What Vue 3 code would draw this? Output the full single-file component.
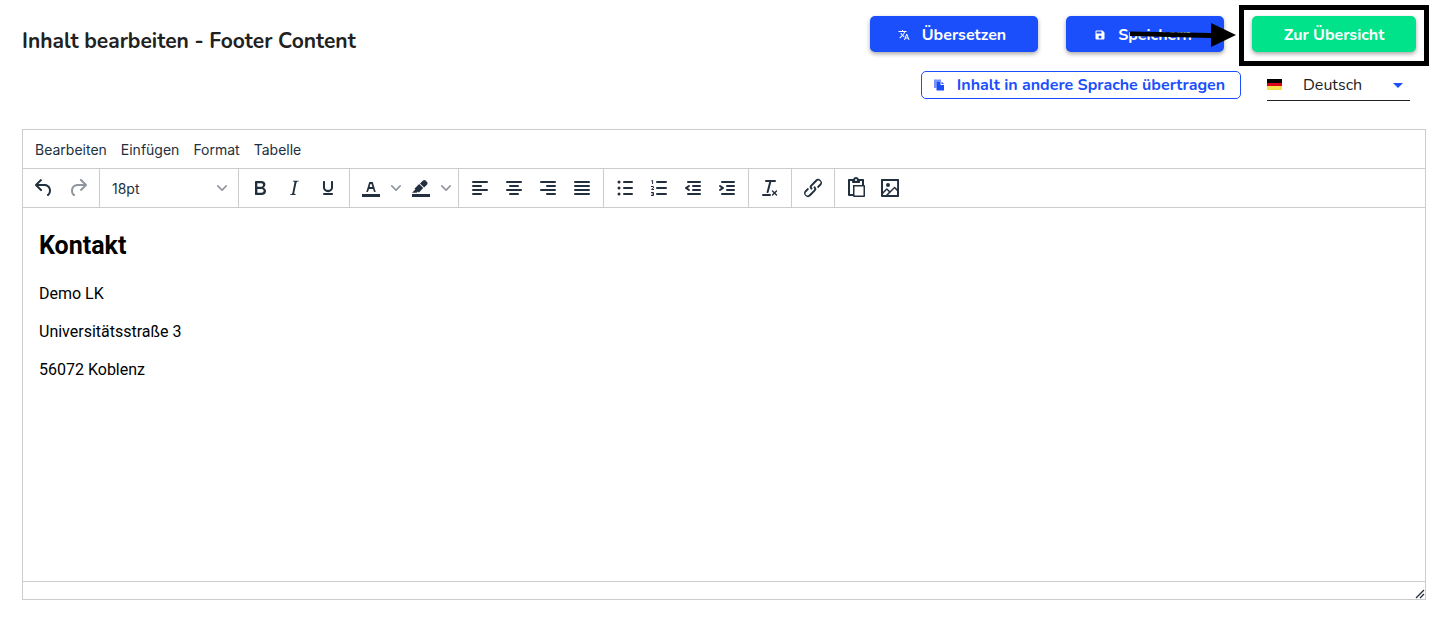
<script setup>
import { ref } from 'vue'

const menus = ['Bearbeiten', 'Einfügen', 'Format', 'Tabelle']
const sizes = ['12pt', '14pt', '18pt', '24pt']
const size = ref('18pt')
const languages = ['Deutsch', 'English']
const language = ref('Deutsch')

const bar = (x, y, w) => `M${x + 1} ${y}h${w - 2}a1 1 0 0 1 0 2h-${w - 2}a1 1 0 0 1 0-2Z`
const dot = (y) => `M4.5 ${y}a1.5 1.5 0 1 0 3 0a1.5 1.5 0 1 0-3 0Z`

const colorBar = 'M3 18h18v3H3z'
const chevron = 'M8.7 2.2c.3-.3.8-.3 1 0 .4.4.4.9 0 1.2L5.7 7.8c-.3.3-.9.3-1.2 0L.2 3.4a.8.8 0 0 1 0-1.2c.3-.3.8-.3 1.1 0L5 6l3.7-3.8Z'

const history = [
  { label: 'Rückgängig', d: 'M6.4 8H12c3.7 0 6.2 2 6.8 5.1.6 2.7-.4 5.6-2.3 6.8a1 1 0 0 1-1-1.8c1.1-.6 1.8-2.7 1.4-4.6-.5-2.1-2.1-3.5-4.9-3.5H6.4l3.3 3.3a1 1 0 1 1-1.4 1.4l-5-5a1 1 0 0 1 0-1.4l5-5a1 1 0 0 1 1.4 1.4L6.4 8Z' },
  { label: 'Wiederholen', disabled: true, d: 'M17.6 10H12c-2.8 0-4.4 1.4-4.9 3.5-.4 2 .3 4 1.4 4.6a1 1 0 1 1-1 1.8c-2-1.2-2.9-4.1-2.3-6.8.6-3 3-5.1 6.8-5.1h5.6l-3.3-3.3a1 1 0 1 1 1.4-1.4l5 5a1 1 0 0 1 0 1.4l-5 5a1 1 0 0 1-1.4-1.4l3.3-3.3Z' },
]

const groups = [
  [
    { label: 'Fett', d: 'M7.8 19c-.3 0-.5 0-.6-.2l-.2-.5V5.7c0-.2 0-.4.2-.5l.6-.2h5c1.5 0 2.7.3 3.5 1 .7.6 1.1 1.4 1.1 2.5a3 3 0 0 1-.6 1.9c-.4.6-1 1-1.6 1.2.4.1.9.3 1.3.6s.8.7 1 1.2c.4.4.5 1 .5 1.6 0 1.3-.4 2.3-1.3 3-.8.7-2.1 1-3.8 1H7.8Zm5-8.3c.6 0 1.2-.1 1.6-.5.4-.3.6-.7.6-1.3 0-1.1-.8-1.7-2.3-1.7H9.3v3.5h3.4Zm.5 6c.7 0 1.3-.1 1.7-.4.4-.4.6-.9.6-1.5s-.2-1-.7-1.4c-.4-.3-1-.4-2-.4H9.4v3.8h4Z' },
    { label: 'Kursiv', d: 'm16.7 4.7-.1.9h-.3c-.6 0-1 0-1.4.3-.3.3-.4.6-.5 1.1l-2.1 9.8v.6c0 .5.4.8 1.4.8h.2l-.2.8H8l.2-.8h.2c1.1 0 1.8-.5 2-1.5l2-9.8.1-.5c0-.6-.4-.8-1.4-.8h-.3l.2-.9h5.8Z' },
    { label: 'Unterstrichen', d: 'M16 5c.6 0 1 .4 1 1v5.5a4 4 0 0 1-.4 1.8l-1 1.4a5.3 5.3 0 0 1-5.5 1 5 5 0 0 1-1.6-1c-.5-.4-.8-.9-1.1-1.4a4 4 0 0 1-.4-1.8V6c0-.6.4-1 1-1s1 .4 1 1v5.5c0 .3 0 .6.2 1l.6.7a3.3 3.3 0 0 0 2.2.8 3.4 3.4 0 0 0 2.2-.8c.3-.2.4-.5.6-.8l.2-.9V6c0-.6.4-1 1-1ZM8 17h8c.6 0 1 .4 1 1s-.4 1-1 1H8a1 1 0 0 1 0-2Z' },
  ],
  [
    { label: 'Textfarbe', split: true, d: colorBar + 'M8.7 16h-.8a.5.5 0 0 1-.5-.6l2.7-9c.1-.3.3-.4.5-.4h2.8c.2 0 .4.1.5.4l2.7 9a.5.5 0 0 1-.5.6h-.8a.5.5 0 0 1-.4-.4l-.7-2.2c0-.3-.3-.4-.5-.4h-3.4c-.2 0-.4.1-.5.4l-.7 2.2c0 .3-.2.4-.4.4Zm2.6-7.6-.6 2a.5.5 0 0 0 .5.6h1.6a.5.5 0 0 0 .5-.6l-.6-2c0-.3-.3-.4-.5-.4h-.4c-.2 0-.4.1-.5.4Z' },
    { label: 'Hintergrundfarbe', split: true, d: colorBar + 'M7.7 16.7H3l3.3-3.3-.7-.8L10.2 8l4 4.1-4 4.2c-.2.2-.6.2-.8 0l-.6-.7-1.1 1.1Zm5-7.5L11 7.4l3-2.9a2 2 0 0 1 2.6 0L18 6c.7.7.7 2 0 2.7l-2.9 2.9-1.8-1.8-.5-.6' },
  ],
  [
    { label: 'Linksbündig', d: bar(4, 5, 16) + bar(4, 9, 10) + bar(4, 13, 16) + bar(4, 17, 10) },
    { label: 'Zentriert', d: bar(4, 5, 16) + bar(7, 9, 10) + bar(4, 13, 16) + bar(7, 17, 10) },
    { label: 'Rechtsbündig', d: bar(4, 5, 16) + bar(10, 9, 10) + bar(4, 13, 16) + bar(10, 17, 10) },
    { label: 'Blocksatz', d: bar(4, 5, 16) + bar(4, 9, 16) + bar(4, 13, 16) + bar(4, 17, 16) },
  ],
  [
    { label: 'Aufzählung', d: dot(6) + dot(12) + dot(18) + bar(10, 5, 10) + bar(10, 11, 10) + bar(10, 17, 10) },
    { label: 'Nummerierte Liste', d: bar(9, 5, 11) + bar(9, 11, 11) + bar(9, 17, 11), line: 'M4.3 4.9L5.6 4.4V8M4 10.5H6.4V12L4.5 13.5H7M4 16.5H6.5V19.5H4M4.6 18H6.5' },
    { label: 'Einzug verkleinern', d: bar(6, 5, 14) + bar(11, 9, 9) + bar(11, 13, 9) + bar(6, 17, 14) + 'M8.6 13.2a1 1 0 0 1-1.2 1.6l-3-2a1 1 0 0 1 0-1.6l3-2a1 1 0 0 1 1.2 1.6L6.8 12l1.8 1.2Z' },
    { label: 'Einzug vergrößern', d: bar(6, 5, 14) + bar(11, 9, 9) + bar(11, 13, 9) + bar(6, 17, 14) + 'M4.4 13.2a1 1 0 0 0 1.2 1.6l3-2a1 1 0 0 0 0-1.6l-3-2a1 1 0 0 0-1.2 1.6L6.2 12l-1.8 1.2Z' },
  ],
  [
    { label: 'Formatierung entfernen', d: 'M13.2 6a1 1 0 0 1 0 .2l-2.6 10a1 1 0 0 1-1 .8h-.2a.8.8 0 0 1-.8-1l2.6-10H8a1 1 0 1 1 0-2h9a1 1 0 0 1 0 2h-3.8ZM5 18h7a1 1 0 0 1 0 2H5a1 1 0 0 1 0-2Zm13 1.5L16.5 18 15 19.5a.7.7 0 0 1-1-1l1.5-1.5-1.5-1.5a.7.7 0 0 1 1-1l1.5 1.5 1.5-1.5a.7.7 0 0 1 1 1L17.5 17l1.5 1.5a.7.7 0 0 1-1 1Z' },
  ],
  [
    { label: 'Link einfügen', d: 'M6.2 12.3a1 1 0 0 1 1.4 1.4l-2 2a2 2 0 1 0 2.6 2.8l4.8-4.8a1 1 0 0 0 0-1.4 1 1 0 1 1 1.4-1.3 2.9 2.9 0 0 1 0 4L9.6 20a3.9 3.9 0 0 1-5.5-5.5l2-2Zm11.6-.6a1 1 0 0 1-1.4-1.4l2-2a2 2 0 1 0-2.6-2.8L11 10.3a1 1 0 0 0 0 1.4A1 1 0 1 1 9.6 13a2.9 2.9 0 0 1 0-4L14.4 4a3.9 3.9 0 0 1 5.5 5.5l-2 2Z' },
  ],
  [
    { label: 'Einfügen', d: 'M18 9V5h-2v1c0 .6-.4 1-1 1H9a1 1 0 0 1-1-1V5H6v13h3V9h9ZM9 20H5a1 1 0 0 1-1-1V4c0-.6.4-1 1-1h4.2A3 3 0 0 1 12 1a3 3 0 0 1 2.8 2H19c.6 0 1 .4 1 1v5a1 1 0 0 1 1 1v10c0 .6-.4 1-1 1H10a1 1 0 0 1-1-1v-1Zm1.5-9.5v9h9v-9h-9ZM12 3a1 1 0 0 0-1 1c0 .5.4 1 1 1s1-.5 1-1-.4-1-1-1Z' },
    { label: 'Bild einfügen', d: 'm5 15.7 3.3-3.2c.3-.3.7-.3 1 0L12 15l4.1-4c.3-.4.8-.4 1 0l2 1.9V5H5v10.7ZM5 18V19h3l2.8-2.9-2-2L5 17.9Zm14-3-2.5-2.4-6.4 6.5H19v-4ZM4 3h16c.6 0 1 .4 1 1v16c0 .6-.4 1-1 1H4a1 1 0 0 1-1-1V4c0-.6.4-1 1-1Zm6 8a2 2 0 1 0 0-4 2 2 0 0 0 0 4Z' },
  ],
]
</script>

<template>
  <main class="page">
    <header class="header">
      <h1 class="title">Inhalt bearbeiten - Footer Content</h1>
      <div class="actions">
        <div class="row">
          <button type="button" class="btn translate">
            <svg width="12" height="12" viewBox="0 0 24 24" aria-hidden="true"><path fill="currentColor" d="M12.87 15.07l-2.54-2.51.03-.03A17.5 17.5 0 0 0 14.07 6H17V4h-7V2H8v2H1v2h11.17C11.5 7.92 10.44 9.75 9 11.35 8.07 10.32 7.3 9.19 6.69 8h-2c.73 1.63 1.73 3.17 2.98 4.56l-5.09 5.02L4 19l5-5 3.11 3.11.76-2.04zM18.500 10h-2L12 22h2l1.120-3h4.750L21 22h2l-4.500-12zm-2.620 7l1.620-4.330L19.120 17h-3.240z" /></svg>
            Übersetzen
          </button>
          <button type="button" class="btn save">
            <svg width="12" height="12" viewBox="0 0 24 24" aria-hidden="true"><path fill="currentColor" d="M17 3H5a2 2 0 0 0-2 2v14a2 2 0 0 0 2 2h14a2 2 0 0 0 2-2V7l-4-4zm-5 16a3 3 0 1 1 0-6 3 3 0 0 1 0 6zm3-10H5V5h10v4z" /></svg>
            Speichern
          </button>
          <div class="target">
            <button type="button" class="btn overview">Zur Übersicht</button>
            <span class="frame"></span>
            <svg class="arrow" width="106" height="26" viewBox="0 0 106 26" aria-hidden="true"><path d="M0 9.500L81 11V1L106 13L81 25V16L0 14Z" /></svg>
          </div>
        </div>
        <div class="row second">
          <button type="button" class="transfer">
            <svg width="12" height="12" viewBox="0 0 24 24" aria-hidden="true"><path fill="currentColor" opacity=".6" d="M2 1h14v4H7v13H2z" /><path fill="currentColor" d="M7 5h8v7h7v11H7zM17 5l5 5h-5z" /></svg>
            Inhalt in andere Sprache übertragen
          </button>
          <div class="language">
            <svg width="15" height="12" viewBox="0 0 15 12" aria-hidden="true"><path fill="#000" d="M0 0h15v4H0z" /><path fill="#d8001a" d="M0 4h15v3H0z" /><path fill="#f4e04d" d="M0 7h15v4H0z" /></svg>
            <select v-model="language" aria-label="Sprache">
              <option v-for="l in languages" :key="l">{{ l }}</option>
            </select>
            <svg class="caret" width="10" height="5" viewBox="0 0 10 5" aria-hidden="true"><path fill="#1a4ffb" d="M0 0h10L5 5z" /></svg>
          </div>
        </div>
      </div>
    </header>

    <section class="editor" aria-label="Editor">
      <nav class="menubar">
        <button v-for="m in menus" :key="m" type="button">{{ m }}</button>
      </nav>
      <div class="toolbar">
        <div class="group">
          <button v-for="t in history" :key="t.label" type="button" class="tool" :disabled="t.disabled" :aria-label="t.label">
            <svg width="24" height="24" aria-hidden="true"><path :d="t.d" /></svg>
          </button>
        </div>
        <div class="group">
          <div class="size">
            <select v-model="size" aria-label="Schriftgröße">
              <option v-for="s in sizes" :key="s">{{ s }}</option>
            </select>
            <svg class="chevron" width="10" height="10" aria-hidden="true"><path :d="chevron" /></svg>
          </div>
        </div>
        <div v-for="(g, i) in groups" :key="i" class="group">
          <template v-for="t in g" :key="t.label">
            <button type="button" class="tool" :aria-label="t.label">
              <svg width="24" height="24" aria-hidden="true">
                <path :d="t.d" fill-rule="evenodd" />
                <path v-if="t.line" :d="t.line" class="line" />
              </svg>
            </button>
            <button v-if="t.split" type="button" class="more" :aria-label="t.label + ' wählen'">
              <svg class="chevron" width="10" height="10" aria-hidden="true"><path :d="chevron" /></svg>
            </button>
          </template>
        </div>
      </div>
      <div class="content" contenteditable="true" spellcheck="false">
        <h2>Kontakt</h2>
        <p>Demo LK</p>
        <p>Universitätsstraße 3</p>
        <p>56072 Koblenz</p>
      </div>
      <footer class="status">
        <svg width="10" height="10" aria-hidden="true"><path d="M1 9L9 1M5 9L9 5" /></svg>
      </footer>
    </section>
  </main>
</template>

<style>
body {
  background: #fff;
}
</style>

<style scoped>
* {
  box-sizing: border-box;
}

button,
select {
  margin: 0;
  padding: 0;
  border: 0;
  background: none;
  color: inherit;
  font: inherit;
  appearance: none;
  cursor: pointer;
}

svg {
  display: block;
  flex: none;
}

.page {
  display: flex;
  flex-direction: column;
  min-height: 100vh;
  padding: 16px 23px 17px 22px;
  color: #212121;
  font: 16px/24px Nunito, Lato, sans-serif;
}

.header {
  display: flex;
  justify-content: space-between;
  align-items: flex-start;
  padding-right: 10px;
  margin-bottom: 28px;
}

.title {
  margin: 10px 0 0;
  font-size: 21px;
  line-height: 30px;
  font-weight: 700;
}

.actions {
  display: flex;
  flex-direction: column;
  align-items: flex-end;
  gap: 18px;
}

.row {
  display: flex;
  gap: 28px;
}

.second {
  gap: 26px;
  padding-right: 6px;
}

.btn {
  display: flex;
  align-items: center;
  justify-content: center;
  gap: 12px;
  height: 36px;
  padding-top: 1px;
  border-radius: 5px;
  background: #1a4ffb;
  color: #fff;
  font-weight: 700;
  box-shadow: 0 2px 4px rgba(0, 0, 0, 0.35);
}

.translate {
  width: 168px;
  padding-right: 4px;
}

.save {
  width: 158px;
  padding-right: 4px;
}

.overview {
  width: 164px;
  background: #00e38a;
}

.target {
  position: relative;
}

.frame {
  position: absolute;
  inset: -11px -13px -14px;
  border: 5px solid #000;
  pointer-events: none;
}

.arrow {
  position: absolute;
  top: 6px;
  right: 180px;
  pointer-events: none;
}

.transfer {
  display: flex;
  align-items: center;
  justify-content: center;
  gap: 12px;
  width: 320px;
  height: 28px;
  margin-top: 1px;
  padding-right: 4px;
  border: 1px solid #1a4ffb;
  border-radius: 5px;
  color: #1a4ffb;
  font-weight: 700;
}

.language {
  display: flex;
  align-items: center;
  width: 143px;
  height: 31px;
  padding-right: 7px;
  border-bottom: 1px solid #212121;
}

.language select {
  flex: 1;
  min-width: 0;
  height: 30px;
  margin-right: -10px;
  padding: 0 10px 0 21px;
}

.caret {
  pointer-events: none;
}

.editor {
  display: flex;
  flex: 1;
  flex-direction: column;
  border: 1px solid #ccc;
  color: #222f3e;
  font: 14px/22px Inter, sans-serif;
}

.menubar {
  display: flex;
  height: 39px;
  padding: 5px 5px 4px;
  border-bottom: 1px solid #ccc;
}

.menubar button {
  padding: 1px 7px 0;
}

.toolbar {
  display: flex;
  height: 39px;
  border-bottom: 1px solid #ccc;
}

.group {
  display: flex;
  align-items: center;
  padding: 0 4px;
  border-right: 1px solid #ccc;
}

.group:last-child {
  border-right: 0;
}

.tool {
  display: flex;
  align-items: center;
  justify-content: center;
  width: 34px;
  height: 34px;
}

.tool:disabled {
  opacity: 0.5;
}

.tool svg {
  fill: #222f3e;
}

.tool .line {
  fill: none;
  stroke: #222f3e;
}

.more {
  display: flex;
  align-items: center;
  justify-content: center;
  width: 16px;
  height: 34px;
}

.chevron {
  fill: #222f3e;
  opacity: 0.5;
  pointer-events: none;
}

.size {
  display: flex;
  align-items: center;
  width: 130px;
  padding-right: 7px;
}

.size select {
  flex: 1;
  min-width: 0;
  height: 34px;
  margin-right: -10px;
  padding: 2px 10px 0 8px;
}

.content {
  flex: 1;
  padding: 21px 16px;
  outline: none;
  color: #000;
  font-family: Roboto, sans-serif;
  font-size: 16px;
}

.content h2 {
  margin: 0 0 20px;
  font-size: 25px;
  line-height: 34px;
}

.content p {
  margin: 0 0 16px;
}

.status {
  display: flex;
  justify-content: flex-end;
  align-items: flex-end;
  height: 18px;
  border-top: 1px solid #ccc;
}

.status path {
  fill: none;
  stroke: #222f3e;
  stroke-width: 1.3;
}
</style>
